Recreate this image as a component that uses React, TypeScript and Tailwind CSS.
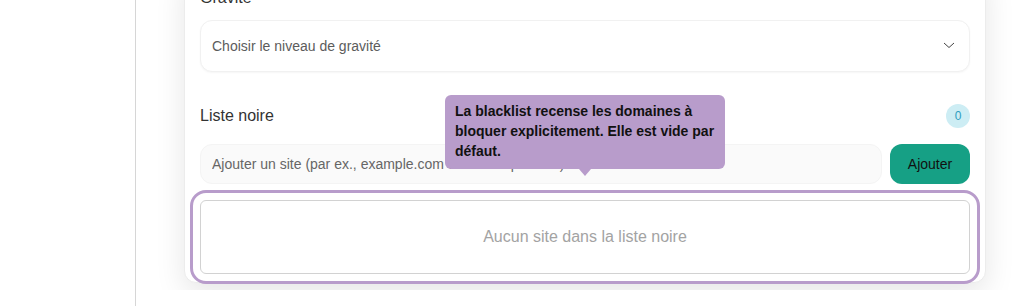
import React from "react";

export default function App() {
  return (
    <div
      className="flex h-[306px] w-[1033px] overflow-hidden bg-white text-[#333]"
      style={{ fontFamily: '"Liberation Sans", Arial, sans-serif' }}
    >
      <aside className="w-[136px] shrink-0 border-r border-[#d6d6d6] bg-white" />
      <main className="flex flex-1 flex-col">
        <div className="h-[290px] overflow-hidden pl-12 pr-[47px]">
          <div className="mt-[-31px] rounded-xl border border-[#ececec] bg-white px-[15px] pb-[8px] pt-4 shadow-[0_10px_30px_rgba(0,0,0,0.1)]">
            <div className="text-base leading-6 text-[#333]">Gravité</div>
            <div className="mt-[10px] flex h-[52px] items-center justify-between rounded-xl border border-[#f1f1f1] bg-white pl-[11px] pr-[14px] shadow-[0_1px_2px_rgba(0,0,0,0.04)]">
              <span className="text-sm text-[#5c5c5c]">Choisir le niveau de gravité</span>
              <svg width="12" height="7" viewBox="0 0 12 7" fill="none" className="mb-[2px]">
                <path d="M1 1 L6 5.5 L11 1" stroke="#444" strokeWidth="1" />
              </svg>
            </div>

            <div className="relative mt-8">
              <div className="flex h-6 items-center justify-between">
                <span className="text-base leading-6 text-[#333]">Liste noire</span>
                <span className="flex h-6 w-6 items-center justify-center rounded-full bg-[#cdedf4] text-xs text-[#2f9dc0]">
                  0
                </span>
              </div>

              <div className="mt-4 flex h-10 gap-2">
                <input
                  className="h-10 flex-1 rounded-xl border border-[#f4f4f4] bg-[#fafafa] px-[11px] text-sm text-[#333] outline-none placeholder:text-[#666]"
                  placeholder="Ajouter un site (par ex., example.com ou *.example.com)"
                />
                <button className="h-10 w-20 rounded-xl bg-[#16a085] text-sm text-[#111]">
                  Ajouter
                </button>
              </div>

              <div className="mt-4 rounded-md border border-[#d2d2d2] bg-white py-6 text-center text-base leading-6 text-[#a3a3a3] outline-[3px] outline-offset-[7px] outline-[#b89ccb] [outline-style:solid]">
                Aucun site dans la liste noire
              </div>

              <div className="absolute left-[245px] top-[-9px] w-[280px] rounded-md bg-[#b89ccb] px-[10px] pb-[8px] pt-[6px] text-sm font-bold leading-5 text-[#111]">
                La blacklist recense les domaines à bloquer explicitement. Elle est vide par défaut.
                <div className="absolute left-[134px] top-full h-0 w-0 border-x-[6px] border-t-[7px] border-x-transparent border-t-[#b89ccb]" />
              </div>
            </div>
          </div>
        </div>
        <div className="h-4 bg-white" />
      </main>
    </div>
  );
}
